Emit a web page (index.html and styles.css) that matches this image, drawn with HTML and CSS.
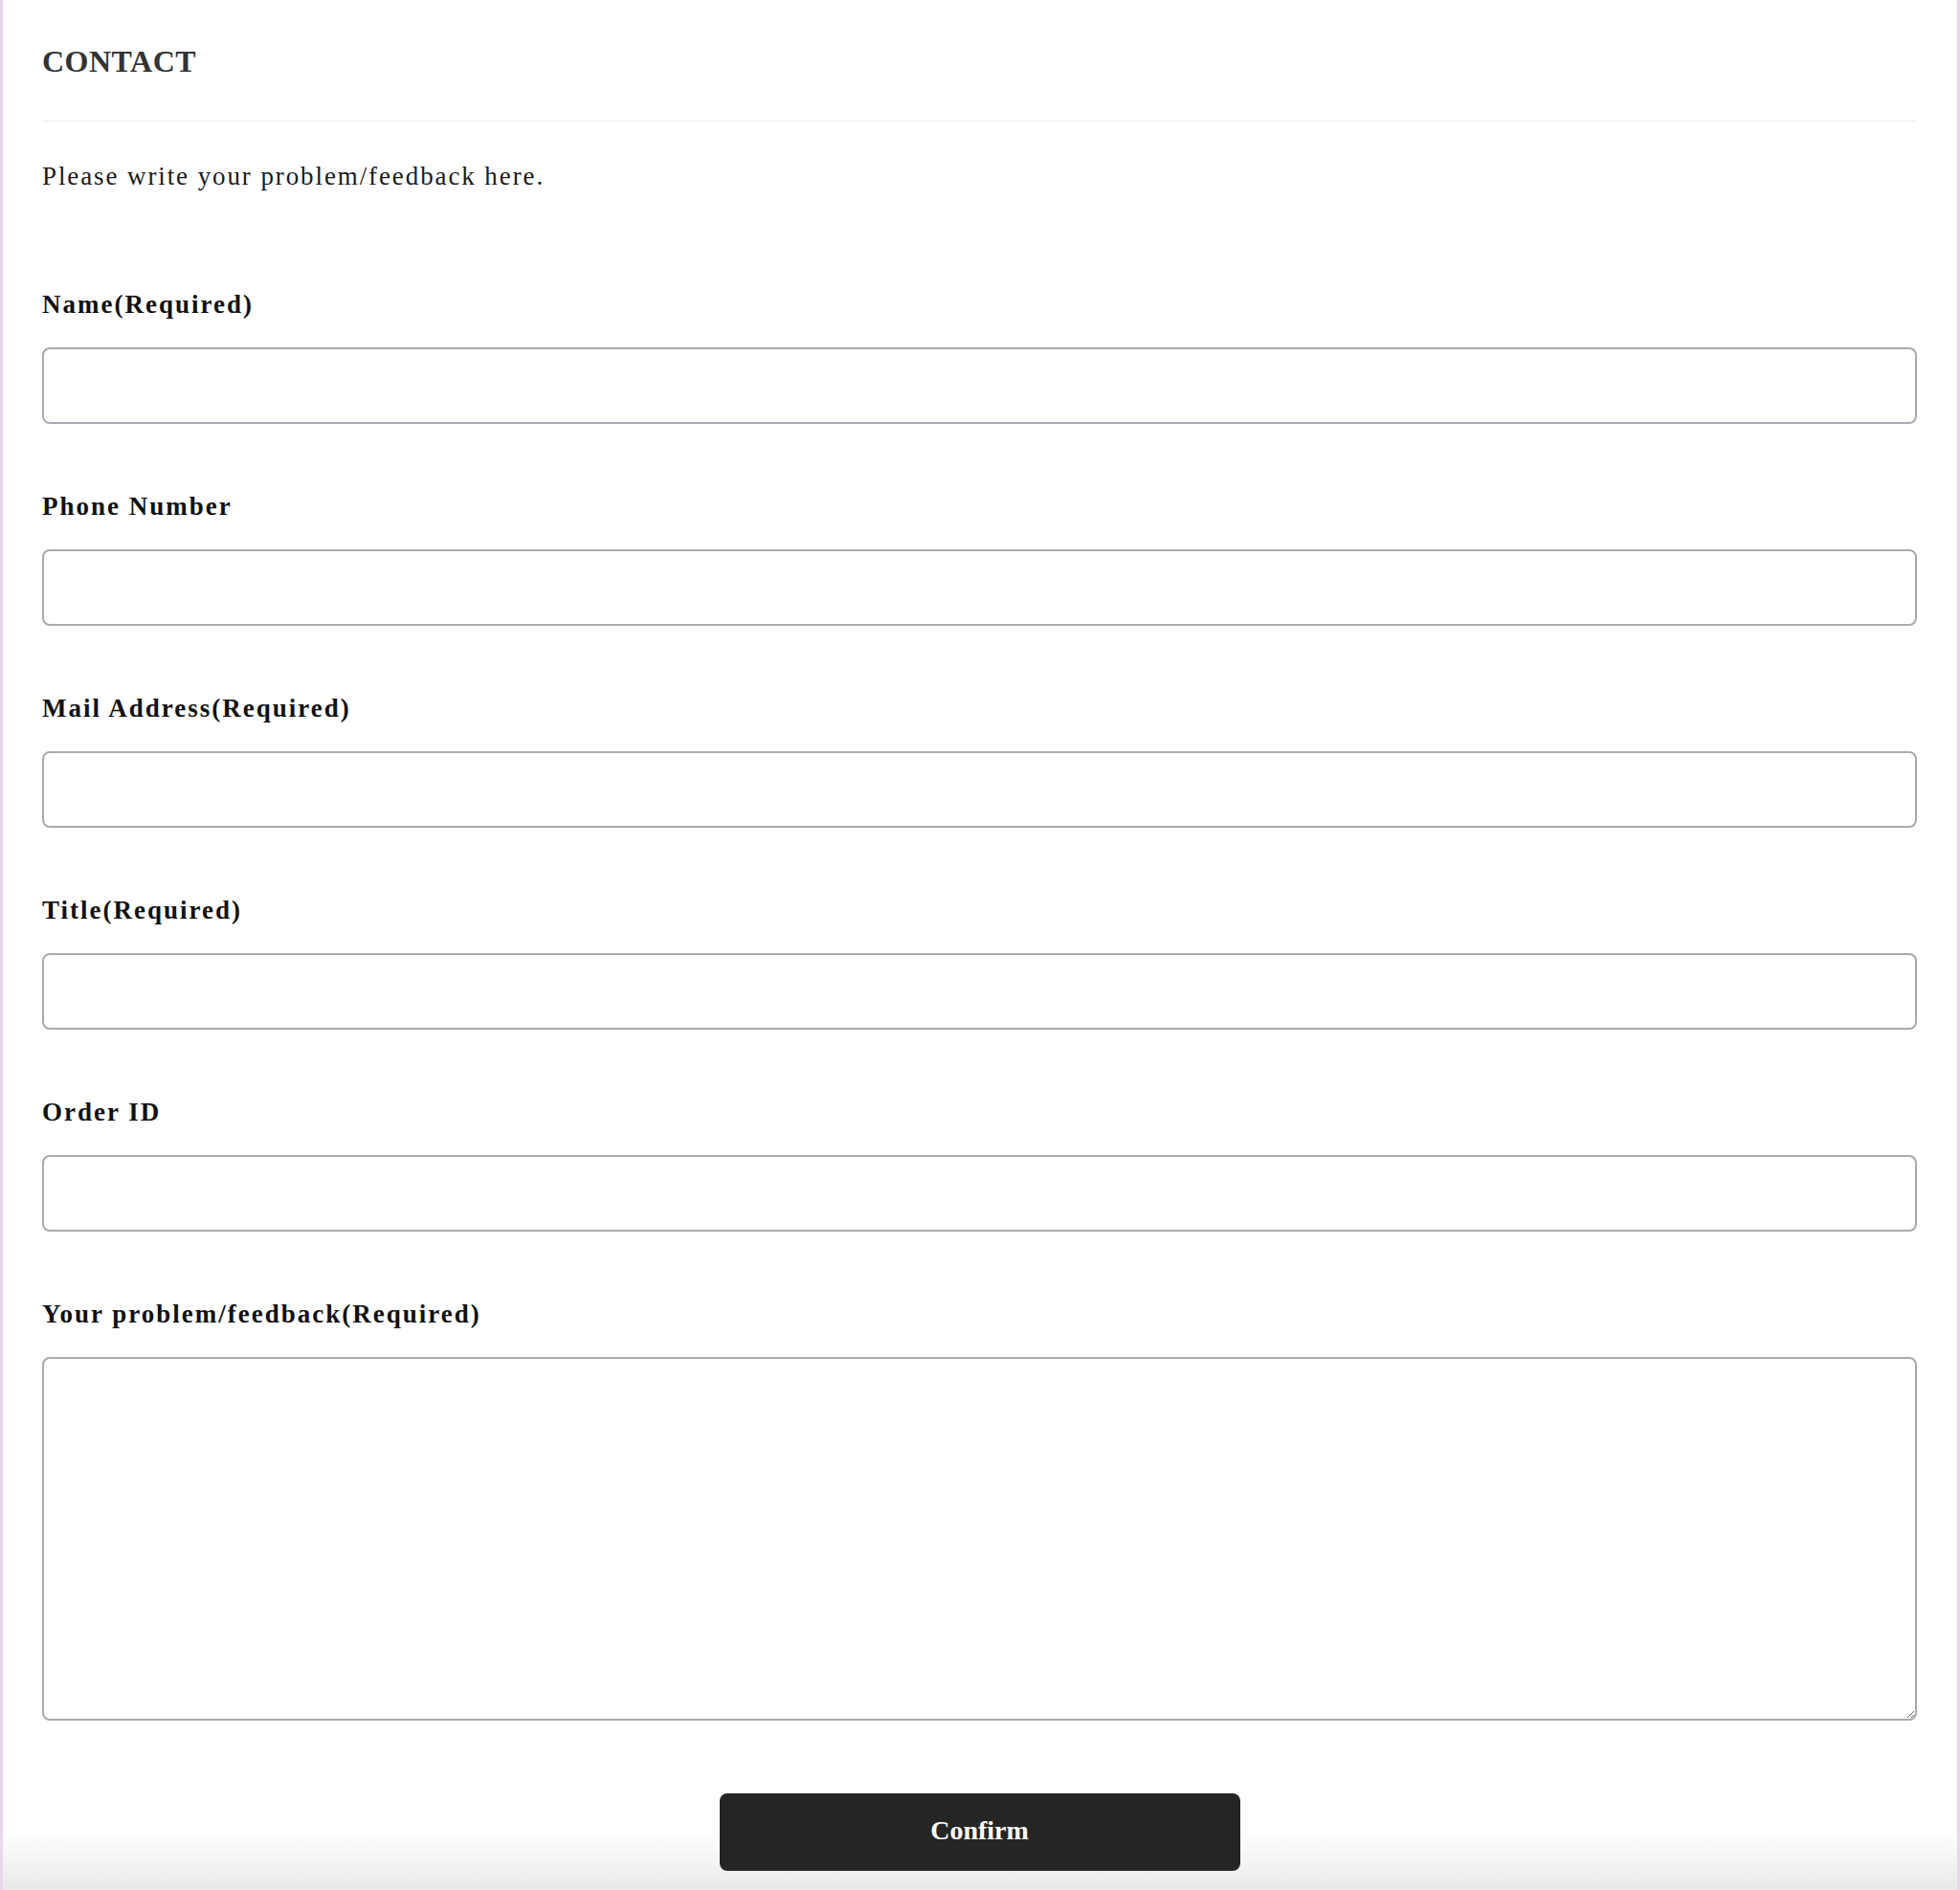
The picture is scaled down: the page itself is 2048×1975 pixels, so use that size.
FILE: index.html
```html
<!DOCTYPE html>
<html lang="en">
  <head>
    <meta charset="UTF-8" />
    <meta name="viewport" content="width=device-width, initial-scale=1.0" />
    <title>Contact</title>
    <link rel="stylesheet" href="styles.css">
  </head>
  <body>
    <div class="page">
      <div class="header">
        <h1>CONTACT</h1>
      </div>

      <p class="intro">Please write your problem/feedback here.</p>

      <form class="contact-form" onsubmit="return false;">
        <div class="field">
          <label for="name">Name(Required)</label>
          <input type="text" id="name" autocomplete="off" />
        </div>

        <div class="field">
          <label for="phone">Phone Number</label>
          <input type="tel" id="phone" autocomplete="off" />
        </div>

        <div class="field">
          <label for="mail">Mail Address(Required)</label>
          <input type="email" id="mail" autocomplete="off" />
        </div>

        <div class="field">
          <label for="title">Title(Required)</label>
          <input type="text" id="title" autocomplete="off" />
        </div>

        <div class="field">
          <label for="order-id">Order ID</label>
          <input type="text" id="order-id" autocomplete="off" />
        </div>

        <div class="field field-message">
          <label for="feedback">Your problem/feedback(Required)</label>
          <textarea id="feedback"></textarea>
        </div>

        <div class="actions">
          <button type="submit">Confirm</button>
        </div>
      </form>
    </div>
  </body>
</html>
```

FILE: styles.css
```css
:root {
  --text-color: #111;
  --border-color: #a9a9b1;
  --border-radius: 8px;
}

* {
  margin: 0;
  padding: 0;
  box-sizing: border-box;
}

body {
  font-family: "Liberation Serif", "Times New Roman", serif;
  color: var(--text-color);
  background-color: #e6d9e8;
  padding: 0 3px;
}

.page {
  min-height: 100vh;
  padding: 44px 42px 0 41px;
  background: linear-gradient(to bottom, #fff calc(100% - 62px), #e9e9e9 100%);
}

.header {
  padding-bottom: 42px;
  border-bottom: 1px solid #ececf0;
}

.header h1 {
  font-size: 32px;
  line-height: 40px;
  font-weight: bold;
  letter-spacing: 0.5px;
  color: #333;
}

.intro {
  margin-top: 37px;
  font-size: 27px;
  line-height: 40px;
  letter-spacing: 1.9px;
  color: #1a1a1a;
}

.contact-form {
  margin-top: 94px;
}

.field {
  display: flex;
  flex-direction: column;
  gap: 25px;
  margin-bottom: 66px;
}

.field label {
  font-size: 27px;
  line-height: 40px;
  font-weight: bold;
  letter-spacing: 2px;
}

.field input,
.field textarea {
  width: 100%;
  height: 80px;
  border: 2px solid var(--border-color);
  border-radius: var(--border-radius);
  background: #fff;
  font-family: inherit;
  font-size: 24px;
  padding: 12px 16px;
}

.field textarea {
  height: 380px;
  resize: vertical;
}

.field-message {
  margin-bottom: 76px;
}

.actions {
  display: flex;
  justify-content: center;
}

button {
  width: 544px;
  height: 81px;
  padding-bottom: 3px;
  background-color: #252525;
  color: #fff;
  border: none;
  border-radius: var(--border-radius);
  font-family: inherit;
  font-size: 28px;
  font-weight: bold;
  cursor: pointer;
}
```
